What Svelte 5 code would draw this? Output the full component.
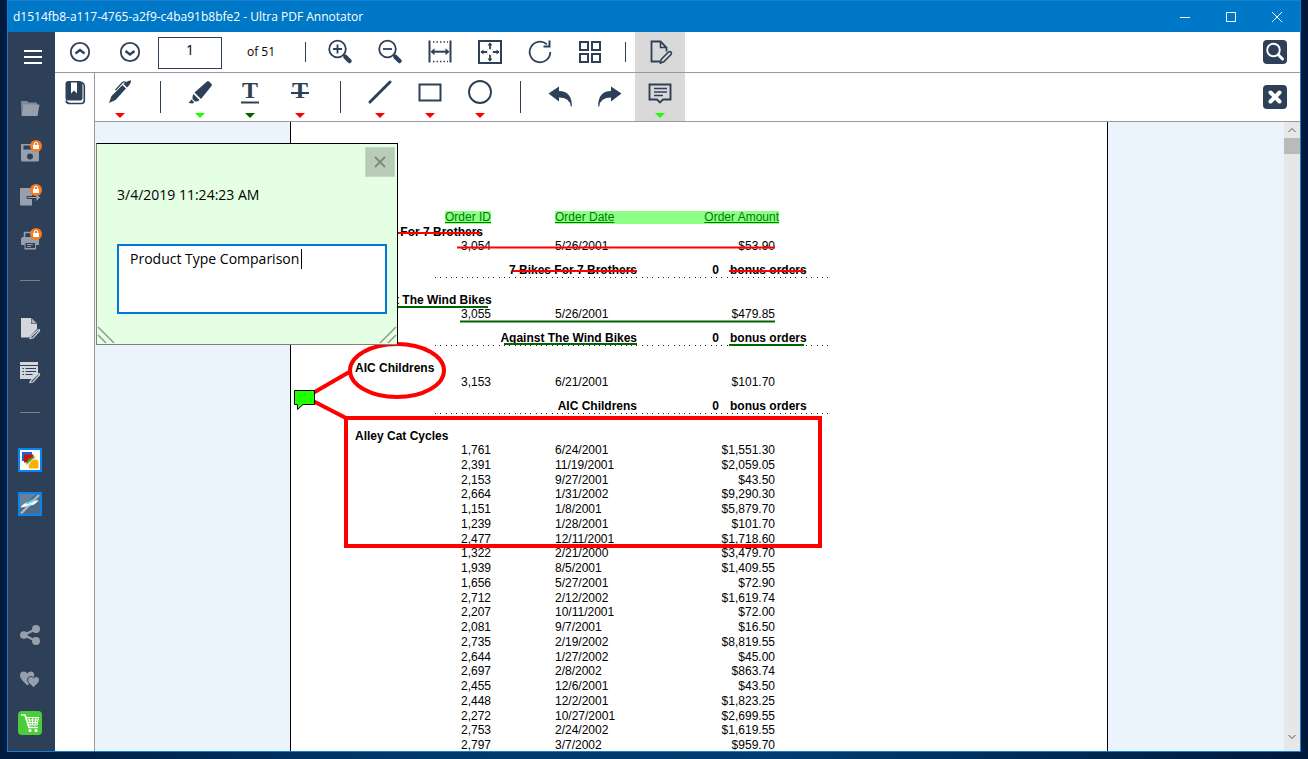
<script lang="ts">
	const FILE_NAME = 'd1514fb8-a117-4765-a2f9-c4ba91b8bfe2';
	const APP_NAME = 'Ultra PDF Annotator';

	type Row = [id: string, date: string, amount: string];
	type Group = { name: string; rows: Row[]; total?: string };

	const groups: Group[] = [
		{ name: '7 Bikes For 7 Brothers', rows: [['3,054', '5/26/2001', '$53.90']], total: '0' },
		{ name: 'Against The Wind Bikes', rows: [['3,055', '5/26/2001', '$479.85']], total: '0' },
		{ name: 'AIC Childrens', rows: [['3,153', '6/21/2001', '$101.70']], total: '0' },
		{
			name: 'Alley Cat Cycles',
			rows: [
				['1,761', '6/24/2001', '$1,551.30'],
				['2,391', '11/19/2001', '$2,059.05'],
				['2,153', '9/27/2001', '$43.50'],
				['2,664', '1/31/2002', '$9,290.30'],
				['1,151', '1/8/2001', '$5,879.70'],
				['1,239', '1/28/2001', '$101.70'],
				['2,477', '12/11/2001', '$1,718.60'],
				['1,322', '2/21/2000', '$3,479.70'],
				['1,939', '8/5/2001', '$1,409.55'],
				['1,656', '5/27/2001', '$72.90'],
				['2,712', '2/12/2002', '$1,619.74'],
				['2,207', '10/11/2001', '$72.00'],
				['2,081', '9/7/2001', '$16.50'],
				['2,735', '2/19/2002', '$8,819.55'],
				['2,644', '1/27/2002', '$45.00'],
				['2,697', '2/8/2002', '$863.74'],
				['2,455', '12/6/2001', '$43.50'],
				['2,448', '12/2/2001', '$1,823.25'],
				['2,272', '10/27/2001', '$2,699.55'],
				['2,753', '2/24/2002', '$1,619.55'],
				['2,797', '3/7/2002', '$959.70']
			]
		}
	];

	const viewTools = [
		{ icon: 'zoom-in', label: 'Zoom in' },
		{ icon: 'zoom-out', label: 'Zoom out' },
		{ icon: 'fit-width', label: 'Fit width' },
		{ icon: 'fit-page', label: 'Fit page' },
		{ icon: 'rotate', label: 'Rotate' },
		{ icon: 'tiles', label: 'Thumbnails' }
	];

	const RED = '#ff0000';
	const LIME = '#1fff00';
	const GREEN = '#006400';

	const drawTools = [
		[{ icon: 'pen', label: 'Pen', color: RED }],
		[
			{ icon: 'marker', label: 'Highlight', color: LIME },
			{ icon: 'underline', label: 'Underline', color: GREEN },
			{ icon: 'strike', label: 'Strikeout', color: RED }
		],
		[
			{ icon: 'line', label: 'Line', color: RED },
			{ icon: 'rect', label: 'Rectangle', color: RED },
			{ icon: 'ellipse', label: 'Ellipse', color: RED }
		],
		[
			{ icon: 'undo', label: 'Undo', color: '' },
			{ icon: 'redo', label: 'Redo', color: '' }
		]
	];

	const sideTop = [
		[
			{ icon: 'folder', label: 'Open', locked: false },
			{ icon: 'save', label: 'Save', locked: true },
			{ icon: 'export', label: 'Export', locked: true },
			{ icon: 'print', label: 'Print', locked: true }
		],
		[
			{ icon: 'page-pen', label: 'Annotate', locked: false },
			{ icon: 'form-pen', label: 'Fill form', locked: false }
		],
		[
			{ icon: 'app-shapes', label: 'Drawing app', locked: false },
			{ icon: 'app-jet', label: 'Reader app', locked: false }
		]
	];

	const sideBottom = [
		{ icon: 'share', label: 'Share' },
		{ icon: 'hearts', label: 'Rate' },
		{ icon: 'cart', label: 'Store' }
	];

	let pageNumber = $state('1');
	let noteText = $state('Product Type Comparison');
	let noteOpen = $state(true);
</script>

{#snippet icon(name: string)}
	<svg class="icon" viewBox="0 0 30 30" width="30" height="30" aria-hidden="true">
		{#if name === 'up' || name === 'down'}
			<circle cx="15" cy="15" r="9.2" fill="none" stroke="currentColor" stroke-width="1.8" />
			<path
				d={name === 'up' ? 'M10.5 16.5 15 13l4.5 3.5' : 'M10.5 14 15 17.5 19.5 14'}
				fill="none"
				stroke="currentColor"
				stroke-width="2.4"
			/>
		{:else if name === 'zoom-in' || name === 'zoom-out'}
			<circle cx="12.5" cy="12" r="8.3" fill="none" stroke="currentColor" stroke-width="1.8" />
			<path d="M18.5 18l2 2" stroke="currentColor" stroke-width="2" />
			<path d="M20.5 20l4 4" stroke="currentColor" stroke-width="4.5" stroke-linecap="round" />
			<path
				d={name === 'zoom-in' ? 'M8 12h9M12.5 7.5v9' : 'M8 12h9'}
				stroke="currentColor"
				stroke-width="1.8"
			/>
		{:else if name === 'fit-width'}
			<path d="M4.5 3.5v22M25.5 3.5v22" stroke="currentColor" stroke-width="2" />
			<path d="M8 5h15M8 24.5h15" stroke="currentColor" stroke-width="1.5" stroke-dasharray="1.5 2" />
			<path d="M8 14.7h14" stroke="currentColor" stroke-width="2" />
			<path d="M5.5 14.7l4-3.5v7zM24.5 14.7l-4-3.5v7z" fill="currentColor" />
		{:else if name === 'fit-page'}
			<rect x="4" y="4" width="22" height="22" fill="none" stroke="currentColor" stroke-width="2" />
			<path d="M15 6v6M15 18v6M6 15h6M18 15h6" stroke="currentColor" stroke-width="1.8" />
			<path
				d="M15 5.500l2.500 3h-5zM15 24.500l2.500-3h-5zM5.500 15l3-2.500v5zM24.500 15l-3-2.500v5z"
				fill="currentColor"
			/>
			<path d="M12.5 12.5h5v5h-5z" fill="none" stroke="#b9c0c9" stroke-dasharray="1 1.500" />
		{:else if name === 'rotate'}
			<path
				d="M25.3 15a10.3 10.3 0 1 1-3.4-7.7"
				fill="none"
				stroke="currentColor"
				stroke-width="1.8"
			/>
			<path d="M24.5 3.5v6h-6" fill="none" stroke="currentColor" stroke-width="2" />
		{:else if name === 'tiles'}
			<path
				d="M5 5h8v8H5zM17 5h8v8h-8zM5 17h8v8H5zM17 17h8v8h-8z"
				fill="none"
				stroke="currentColor"
				stroke-width="2"
			/>
		{:else if name === 'edit'}
			<path d="M15 24.5H6.5V4.500h9l6 6v4" fill="none" stroke="currentColor" stroke-width="1.8" />
			<path d="M15.5 4.5v6h6" fill="none" stroke="currentColor" stroke-width="1.5" />
			<path
				d="M15.5 26l.8-3.800 7.200-7.200q1.500-1 2.500 0t0 2.500l-7.200 7.200z"
				fill="none"
				stroke="currentColor"
				stroke-width="1.6"
			/>
		{:else if name === 'book'}
			<path
				d="M8.500 3h11q3 0 3 3v14q0 2.500-2.500 2.500H8q-2.500 0-2.500-2.500V6q0-3 3-3z"
				fill="currentColor"
			/>
			<path d="M11 4.500h6v11l-3-3-3 3z" fill="#fff" />
			<path
				d="M22 4.500q2.300 1 2.300 3.500v14.500q0 3-3 3H10q-3.500 0-4-3"
				fill="none"
				stroke="currentColor"
				stroke-width="1.6"
			/>
		{:else if name === 'pen'}
			<path d="M4 25l2.500-7L17.500 7l3.500 3.500L10.500 22z" fill="currentColor" />
			<path d="M18.500 6q4.500-4 7.500-3.500.5 2.500-4 7z" fill="currentColor" />
			<path d="M10.500 12 17 5q2-1.800 4-.5" fill="none" stroke="currentColor" stroke-width="1.200" />
			<path d="M17.500 6.500l4 4" stroke="#fff" stroke-width=".7" />
		{:else if name === 'marker'}
			<path d="M9.500 14.500 22 3.500q1-1 2 0l2.500 2.500q1 1 0 2L16 21z" fill="currentColor" />
			<path d="M8.500 16l6 6q-2 1.800-4.500 1.500L7.500 21q-.5-3 1-5z" fill="currentColor" />
			<path d="M6.500 21.500l2.500 2.500-1 1.500-4.500-.5z" fill="currentColor" />
		{:else if name === 'underline' || name === 'strike'}
			<text class="letter" x="15" y="20" text-anchor="middle" fill="currentColor">T</text>
			<path
				d={name === 'underline' ? 'M6 24.500h18' : 'M6 15h18'}
				stroke="currentColor"
				stroke-width="2"
			/>
		{:else if name === 'line'}
			<path d="M5 24 25 4" stroke="currentColor" stroke-width="3" stroke-linecap="round" />
		{:else if name === 'rect'}
			<rect x="4.500" y="6.500" width="21" height="16" fill="none" stroke="currentColor" stroke-width="2" />
		{:else if name === 'ellipse'}
			<circle cx="15" cy="14" r="11" fill="none" stroke="currentColor" stroke-width="1.900" />
		{:else if name === 'undo' || name === 'redo'}
			<path
				transform={name === 'redo' ? 'translate(30 0) scale(-1 1)' : undefined}
				d="M3.500 15.500 14 8.500v4.500q13 0 12.800 15.500h-1q-1-9-11.800-9v4z"
				fill="currentColor"
			/>
		{:else if name === 'comment'}
			<path
				d="M4.500 6.500h21v15H18l-3 3-3-3H4.500z"
				fill="none"
				stroke="currentColor"
				stroke-width="1.900"
			/>
			<path d="M9 10.500h13M9 14h13M9 17.500h9" stroke="currentColor" stroke-width="1.600" />
		{:else if name === 'search'}
			<circle cx="13.500" cy="13" r="6.300" fill="none" stroke="#fff" stroke-width="1.900" />
			<path d="M18.500 18l4 4" stroke="#fff" stroke-width="3" stroke-linecap="round" />
		{:else if name === 'close'}
			<path d="M10.500 10.500l9 9M19.500 10.500l-9 9" stroke="#fff" stroke-width="4" stroke-linecap="round" />
		{:else if name === 'menu'}
			<path d="M6 9h18M6 15h18M6 21h18" stroke="#fff" stroke-width="2" />
		{:else if name === 'folder'}
			<path d="M6 8h6l1.500 1.500H22v2.500H8L6.500 22z" fill="#7e8a99" />
			<path d="M8 11.500h16.500L22.500 23H6.500z" fill="#969fab" />
		{:else if name === 'save'}
			<path d="M6 7h16l2 2v14q0 1.500-1.500 1.500h-15Q6 24.500 6 23z" fill="#969fab" />
			<path d="M8.500 8.500h12v4h-12z" fill="#2e4057" />
			<circle cx="15" cy="19.500" r="3" fill="#2e4057" />
		{:else if name === 'export'}
			<path d="M5 8q0-1 1-1h11v17.500H6q-1 0-1-1z" fill="#969fab" />
			<path d="M12 15.500h9v-3.500l4.500 4.500-4.500 4.500v-3.500h-9z" fill="#969fab" stroke="#2e4057" />
		{:else if name === 'print'}
			<path d="M9.500 12V7.500h9.500l2 2V12" fill="none" stroke="#969fab" stroke-width="1.500" />
			<path d="M8 12h14q2 0 2 2v6h-3v4.500H9.500V20H6v-6q0-2 2-2z" fill="#969fab" />
			<path d="M10.500 18h9.500v5h-9.500z" fill="#2e4057" />
			<path d="M12 19.500h6M12 21.500h4" stroke="#969fab" />
		{:else if name === 'page-pen'}
			<path d="M6 5h10v6h6v5l-8 8.500H6z" fill="#d3d6db" />
			<path d="M16.500 5l5.500 5.500h-5.500z" fill="#a9b0ba" />
			<path d="M15.500 24l7.500-7q2-1 1.500 1l-6.500 7-3 .5z" fill="#2e4057" stroke="#d3d6db" stroke-width="1.200" />
		{:else if name === 'form-pen'}
			<path d="M5 5h18v12l-5 5H5z" fill="#d3d6db" />
			<path
				d="M5 8.500h18M7.500 11.500h1.500M10.500 11.500h10.500M7.500 14.500h1.500M10.500 14.500h10.500M7.500 17.500h1.500M10.500 17.500h7"
				stroke="#2e4057"
			/>
			<path d="M15.500 24l7.500-7q2-1 1.500 1l-6.500 7-3 .5z" fill="#2e4057" stroke="#d3d6db" stroke-width="1.200" />
		{:else if name === 'app-shapes'}
			<rect x="4" y="4" width="22" height="22" fill="#fff" stroke="#0a84f0" stroke-width="2" />
			<path d="M7 7h10v9H7z" fill="#1a66cc" />
			<path d="M9 9.500h9.500v8H9z" fill="#cc1111" />
			<path d="M11 19.500q1-7 9-8l1 2-7.500 7z" fill="#4ea51e" />
			<path d="M12 20.500l9-8" stroke="#f1f1dc" stroke-width="2" />
			<path d="M14 23.500v-3q2-6 6-6t3.500 4v5z" fill="#f7b200" />
		{:else if name === 'app-jet'}
			<rect x="4" y="4" width="22" height="22" fill="#4f6b88" stroke="#0a84f0" stroke-width="2" />
			<path d="M5 5h16L5 19z" fill="#6b8099" />
			<path d="M6 24.500 24 6" stroke="#aab5c2" stroke-width="2.500" />
			<path d="M5.500 18.500q3-5 9-5.500l9-2q-3 5-8 5.500z" fill="#eefcff" />
			<path d="M11 14l6-3.500 3 .5-4 4.500-4 1.500z" fill="#56d3ee" />
			<path d="M6.500 18l16-6" stroke="#fff" stroke-width="1.300" />
		{:else if name === 'share'}
			<path d="M21 9 9 15l12 6" fill="none" stroke="#969fab" stroke-width="2.400" />
			<path
				d="M5 15a3.800 3.800 0 1 0 7.600 0 3.800 3.800 0 1 0-7.600 0M17 9a4 4 0 1 0 8 0 4 4 0 1 0-8 0M17 21a4 4 0 1 0 8 0 4 4 0 1 0-8 0"
				fill="#969fab"
			/>
		{:else if name === 'hearts'}
			<path d="M12.500 21.500Q5 15 5 11.500q0-4 4-4 2 0 3.200 2 1.500-2 3.500-2 3.800 0 3.500 4-.5 4-6.700 10z" fill="#969fab" />
			<path
				d="M18.500 23.500q-6-5-6-7.500 0-3.500 3.200-3.500 1.800 0 2.800 1.500 1.200-1.500 3-1.500 3 0 3 3.500 0 2.500-6 7.500z"
				fill="#969fab"
				stroke="#2e4057"
			/>
		{:else if name === 'cart'}
			<rect x="3" y="3" width="24" height="24" rx="4" fill="#4bcc39" />
			<path d="M6 7h4l4 12.500h9" fill="none" stroke="#fff" stroke-width="1.600" />
			<path
				d="M10.500 9.500h13l-1.500 7.500h-9M11.500 12h11.500M12 14.500h10.500M14 9.500l1.500 7.500M17.500 9.500v7.500M21 9.500l-1 7.500"
				fill="none"
				stroke="#fff"
				stroke-width="1.100"
			/>
			<circle cx="15" cy="22.500" r="1.600" fill="#fff" />
			<circle cx="21" cy="22.500" r="1.600" fill="#fff" />
		{/if}
	</svg>
{/snippet}

<div class="desktop">
	<div class="window">
		<header class="titlebar">
			<h1>{FILE_NAME} - {APP_NAME}</h1>
			<button type="button" aria-label="Minimize">
				<svg width="12" height="12"><path d="M1 6.500h10" stroke="#fff" /></svg>
			</button>
			<button type="button" aria-label="Maximize">
				<svg width="12" height="12"><path d="M1.500 1.500h9v9h-9z" fill="none" stroke="#fff" /></svg>
			</button>
			<button type="button" aria-label="Close">
				<svg width="12" height="12"><path d="M1 1l10 10M11 1 1 11" stroke="#fff" /></svg>
			</button>
		</header>

		<div class="body">
			<nav class="sidebar" aria-label="Application">
				<button type="button" class="sidebar__menu" aria-label="Menu">{@render icon('menu')}</button>
				{#each sideTop as section, i}
					{#if i > 0}<hr />{/if}
					{#each section as item}
						<button type="button" class="sidebar__item" aria-label={item.label}>
							{@render icon(item.icon)}
							{#if item.locked}
								<svg class="lock" viewBox="0 0 12 12" aria-hidden="true">
									<circle cx="6" cy="6" r="6" fill="#fb7b22" />
									<path d="M4.300 5.500V4q0-1.700 1.700-1.700T7.700 4v1.500" fill="none" stroke="#fff" />
									<path d="M3 5h6v4H3z" fill="#fff" />
								</svg>
							{/if}
						</button>
					{/each}
				{/each}
				<div class="sidebar__spacer"></div>
				{#each sideBottom as item}
					<button type="button" class="sidebar__item" aria-label={item.label}>
						{@render icon(item.icon)}
					</button>
				{/each}
			</nav>

			<main class="main">
				<div class="toolbar toolbar--view">
					<button type="button" class="tool" aria-label="Previous page">{@render icon('up')}</button>
					<button type="button" class="tool" aria-label="Next page">{@render icon('down')}</button>
					<input class="page-number" aria-label="Page number" bind:value={pageNumber} />
					<span class="page-count">of 51</span>
					<span class="divider divider--short"></span>
					{#each viewTools as tool}
						<button type="button" class="tool" aria-label={tool.label}>{@render icon(tool.icon)}</button>
					{/each}
					<span class="divider divider--short"></span>
					<button type="button" class="tool tool--active" aria-label="Annotate">
						{@render icon('edit')}
					</button>
					<button type="button" class="tile" aria-label="Search">{@render icon('search')}</button>
				</div>

				<div class="workspace">
					<aside class="rail">
						<button type="button" aria-label="Bookmarks">{@render icon('book')}</button>
					</aside>

					<div class="editor">
						<div class="toolbar toolbar--draw">
							{#each drawTools as set, i}
								{#if i > 0}<span class="divider"></span>{/if}
								{#each set as tool}
									<button type="button" class="tool" aria-label={tool.label}>
										{@render icon(tool.icon)}
										{#if tool.color}
											<span class="swatch" style="border-top-color: {tool.color}"></span>
										{/if}
									</button>
								{/each}
							{/each}
							<button type="button" class="tool tool--active" aria-label="Comment">
								{@render icon('comment')}
								<span class="swatch" style="border-top-color: {LIME}"></span>
							</button>
							<button type="button" class="tile" aria-label="Close annotation tools">
								{@render icon('close')}
							</button>
						</div>

						<div class="viewer">
							<div class="canvas">
								<article class="page">
									<table>
										<colgroup>
											<col class="col-id" />
											<col class="col-date" />
											<col class="col-amount" />
											<col />
										</colgroup>
										<thead>
											<tr>
												<th class="num"><span>Order ID</span></th>
												<th class="date"><span>Order Date</span></th>
												<th class="num"><span>Order Amount</span></th>
												<th></th>
											</tr>
										</thead>
										{#each groups as group}
											<tbody>
												<tr>
													<th class="group" colspan="4" scope="rowgroup">{group.name}</th>
												</tr>
												{#each group.rows as [id, date, amount]}
													<tr>
														<td class="num">{id}</td>
														<td class="date">{date}</td>
														<td class="num amount">{amount}</td>
														<td></td>
													</tr>
												{/each}
												{#if group.total}
													<tr>
														<td colspan="4">
															<div class="subtotal">
																<span class="subtotal__name">{group.name}</span>
																<span class="subtotal__count">{group.total}</span>
																<span>bonus orders</span>
															</div>
														</td>
													</tr>
												{/if}
											</tbody>
										{/each}
									</table>

									<!-- Ink layer, in page coordinates -->
									<svg class="ink" width="816" height="640" viewBox="0 0 816 640" aria-hidden="true">
										<g stroke="#222" stroke-dasharray="1 4.300" shape-rendering="crispEdges">
											<path d="M144 155.500h397M144 223.500h397M144 291.500h397" />
										</g>
										<g stroke="#ff0000" stroke-width="2">
											<path d="M64 111h125M166 125.500h318M222 149h124M438 149h75" />
										</g>
										<g stroke="#006400" stroke-width="2">
											<path d="M64 185h133M169 199.500h315M213 222h133M438 223h75" />
										</g>
										<g fill="none" stroke="#ff0000" stroke-width="4">
											<ellipse cx="106" cy="248.500" rx="47" ry="26.500" />
											<path d="M22 271 60 249M22 279 55 296h474v128H55V296" />
										</g>
										<path d="M3.500 268.500h20v14H12l-5.500 5v-5h-3z" fill="#1fff00" stroke="#000" />
									</svg>
								</article>
							</div>

							<div class="scrollbar" aria-hidden="true">
								<svg width="16" height="16"><path d="M4.500 10 8 6.500 11.500 10" fill="none" stroke="#555" /></svg>
								<span class="scrollbar__thumb"></span>
								<svg class="scrollbar__end" width="16" height="16">
									<path d="M4.500 6 8 9.500 11.500 6" fill="none" stroke="#555" />
								</svg>
							</div>

							{#if noteOpen}
								<section class="note" aria-label="Comment">
									<button
										type="button"
										class="note__close"
										aria-label="Close comment"
										onclick={() => (noteOpen = false)}
									>
										<svg width="12" height="12">
											<path d="M1 1l10 10M11 1 1 11" stroke="#7d8a7d" stroke-width="1.800" />
										</svg>
									</button>
									<time class="note__date" datetime="2019-03-04T11:24:23">3/4/2019 11:24:23 AM</time>
									<div class="note__field">
										<textarea aria-label="Comment text" spellcheck="false" bind:value={noteText}></textarea>
										<span class="note__caret"></span>
									</div>
									<svg class="grip grip--left" width="18" height="18">
										<path d="M1 1l16 16M1 9l8 8" stroke="#8f9c8f" stroke-width="1.500" />
									</svg>
									<svg class="grip grip--right" width="18" height="18">
										<path d="M17 1 1 17M17 9l-8 8" stroke="#8f9c8f" stroke-width="1.500" />
									</svg>
								</section>
							{/if}
						</div>
					</div>
				</div>
			</main>
		</div>
	</div>
</div>

<style>
	:global(body) {
		margin: 0;
	}

	.desktop {
		box-sizing: border-box;
		height: 100vh;
		padding: 0 7px 7px;
		background: linear-gradient(90deg, #001b3d, #00386b 30%, #003c70 60%, #00193a);
		font-family: 'Open Sans', 'Noto Sans', sans-serif;
		color: #000;
	}

	button {
		display: flex;
		align-items: center;
		justify-content: center;
		flex: none;
		margin: 0;
		padding: 0;
		border: 0;
		background: none;
		color: inherit;
		font: inherit;
	}

	svg {
		display: block;
		flex: none;
	}

	.letter {
		font: 700 24px 'Liberation Serif', serif;
	}

	.window {
		display: flex;
		flex-direction: column;
		box-sizing: border-box;
		height: 100%;
		border: 1px solid #1a7fd4;
		background: #fff;
	}

	.titlebar {
		display: flex;
		flex: none;
		height: 31px;
		background: #0078c8;
		color: #fff;
	}

	.titlebar h1 {
		flex: 1;
		margin: 0;
		padding-left: 5px;
		font-size: 12px;
		font-weight: 400;
		line-height: 31px;
	}

	.titlebar button {
		width: 46px;
	}

	.body {
		display: flex;
		flex: 1;
		min-height: 0;
	}

	.sidebar {
		display: flex;
		flex-direction: column;
		flex: none;
		width: 47px;
		padding-bottom: 6px;
		box-sizing: border-box;
		background: #2e4057;
	}

	.sidebar__menu {
		height: 50px;
		margin-bottom: 4px;
		padding-left: 3px;
	}

	.sidebar__item {
		position: relative;
		width: 44px;
		height: 44px;
	}

	.sidebar__spacer {
		flex: 1;
	}

	.sidebar hr {
		width: 20px;
		margin: 18px 0 25px 12px;
		border: 0;
		border-top: 1px solid #75808e;
	}

	.lock {
		position: absolute;
		top: 10px;
		left: 22px;
		width: 12px;
		height: 12px;
	}

	.main {
		display: flex;
		flex-direction: column;
		flex: 1;
		min-width: 0;
		color: #2e4057;
	}

	.toolbar {
		display: flex;
		flex: none;
		align-items: center;
		border-bottom: 1px solid #999;
	}

	.toolbar--view {
		height: 40px;
	}

	.toolbar--draw {
		height: 48px;
	}

	.tool {
		flex-direction: column;
		width: 50px;
		height: 100%;
	}

	.toolbar--draw .tool {
		justify-content: flex-start;
		padding-top: 5px;
		box-sizing: border-box;
	}

	.tool--active {
		background: #d9d9d9;
	}

	.swatch {
		margin-top: 5px;
		border: 5px solid transparent;
		border-bottom: 0;
	}

	.divider {
		width: 1px;
		height: 32px;
		margin: 0 14px 0 15px;
		background: #2e4057;
	}

	.divider--short {
		height: 20px;
		margin: 0 9px 0 10px;
	}

	.page-number {
		box-sizing: border-box;
		width: 64px;
		height: 32px;
		margin: 1px 0 0 3px;
		padding: 0 0 7px;
		border: 1px solid #2e4057;
		font: 14px 'Open Sans', 'Noto Sans', sans-serif;
		text-align: center;
		color: #000;
		outline: 0;
	}

	.page-count {
		box-sizing: border-box;
		width: 73px;
		padding: 0 0 2px 25px;
		font-size: 12px;
		color: #000;
	}

	.tile {
		width: 24px;
		height: 24px;
		margin: 0 13px 0 auto;
		border-radius: 4px;
		background: #2e4057;
	}

	.workspace {
		display: flex;
		flex: 1;
		min-height: 0;
	}

	.rail {
		flex: none;
		width: 40px;
		padding-top: 5px;
		box-sizing: border-box;
		border-right: 1px solid #999;
	}

	.rail button {
		width: 39px;
	}

	.editor {
		display: flex;
		flex-direction: column;
		flex: 1;
		min-width: 0;
	}

	.viewer {
		position: relative;
		display: flex;
		flex: 1;
		min-height: 0;
		background: #ebf3fd;
		color: #000;
	}

	.canvas {
		display: flex;
		flex: 1;
		justify-content: center;
		min-width: 0;
		padding-left: 19px;
		overflow: hidden;
	}

	.page {
		position: relative;
		flex: none;
		width: 816px;
		padding-top: 89px;
		border: solid #000;
		border-width: 0 1px;
		background: #fff;
		font: 12px/14px 'Liberation Sans', Arial, sans-serif;
	}

	table {
		width: 541px;
		border-collapse: collapse;
		table-layout: fixed;
	}

	.col-id {
		width: 200px;
	}

	.col-date {
		width: 210px;
	}

	.col-amount {
		width: 78px;
	}

	tr {
		height: 15px;
	}

	tbody tr:nth-child(4n) {
		height: 14px;
	}

	th,
	td {
		padding: 0;
		font-weight: 400;
		text-align: left;
		vertical-align: top;
		white-space: nowrap;
	}

	thead tr {
		height: 13px;
		line-height: 13px;
	}

	thead th {
		color: #007a00;
	}

	thead span {
		display: block;
		width: fit-content;
		background: #8cff85;
		text-decoration: underline;
	}

	thead .num span {
		margin-left: auto;
	}

	/* The date and amount headings share one continuous highlight */
	thead .date {
		background: linear-gradient(#8cff85, #8cff85) right / 146px 100% no-repeat;
	}

	thead .date + .num {
		background: #8cff85;
	}

	.num {
		text-align: right;
	}

	.date {
		padding-left: 64px;
	}

	.amount {
		padding-right: 4px;
	}

	.group {
		padding-left: 64px;
		font-weight: 700;
		vertical-align: middle;
	}

	.subtotal {
		display: flex;
		height: 16px;
		padding: 8px 0 14px;
		font-weight: 700;
		line-height: 16px;
	}

	.subtotal__name {
		width: 346px;
		text-align: right;
	}

	.subtotal__count {
		width: 82px;
		margin-right: 11px;
		text-align: right;
	}

	.ink {
		position: absolute;
		top: 0;
		left: 0;
	}

	.scrollbar {
		display: flex;
		flex-direction: column;
		flex: none;
		width: 16px;
		background: #e6e7e8;
	}

	.scrollbar__thumb {
		height: 16px;
		background: #b9bbba;
	}

	.scrollbar__end {
		margin: auto 0 6px;
	}

	/* Floats over the page, anchored to the viewer corner */
	.note {
		position: absolute;
		top: 21px;
		left: 1px;
		display: flex;
		flex-direction: column;
		box-sizing: border-box;
		width: 302px;
		height: 202px;
		padding: 3px 2px 0 20px;
		border: 1px solid #000;
		border-bottom-color: #808080;
		border-left-color: #808080;
		background: #e4ffe4;
		font-size: 14px;
	}

	.note__close {
		align-self: flex-end;
		width: 30px;
		height: 30px;
		border: 1px solid #c8d8c8;
		box-sizing: border-box;
		background: #b8ccb8;
	}

	.note__date {
		margin-top: 8px;
		line-height: 20px;
	}

	.note__field {
		position: relative;
		width: 270px;
		margin-top: 39px;
	}

	textarea {
		display: block;
		box-sizing: border-box;
		width: 100%;
		height: 70px;
		padding: 3px 11px;
		border: 2px solid #0078d7;
		background: #fff;
		font: 14px/20px 'Open Sans', 'Noto Sans', sans-serif;
		color: #000;
		resize: none;
		outline: 0;
	}

	.note__caret {
		position: absolute;
		top: 5px;
		left: 184px;
		width: 1px;
		height: 20px;
		background: #000;
	}

	.grip {
		position: absolute;
		bottom: 0;
	}

	.grip--left {
		left: 0;
	}

	.grip--right {
		right: 0;
	}
</style>
